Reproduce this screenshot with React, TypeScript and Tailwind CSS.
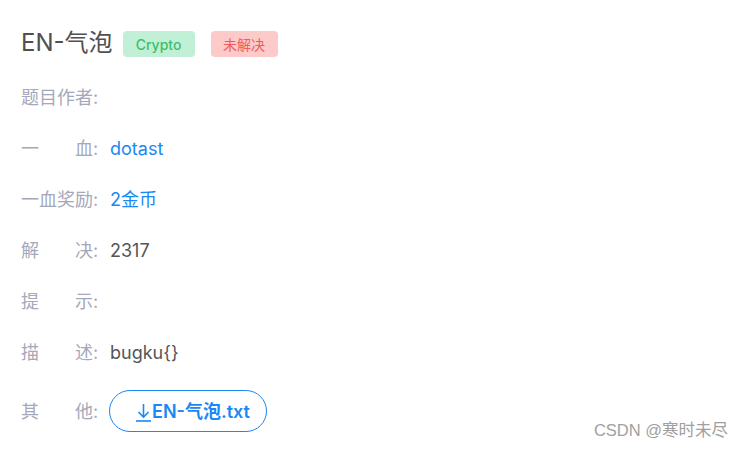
import React from "react";

const font = { fontFamily: '"Inter", "Noto Sans CJK SC", sans-serif' };

function Row({ label, children }: { label: string; children?: React.ReactNode }) {
  return (
    <div className="flex items-center h-[27px] text-[18px] leading-[27px]">
      <span className="inline-block w-[72px] text-justify [text-align-last:justify] text-[#a5a8ba]">{label}</span>
      <span className="inline-block w-[17px] text-[#a5a8ba]">:</span>
      <span className="text-[#555]">{children}</span>
    </div>
  );
}

export default function App() {
  return (
    <div className="relative w-[744px] h-[452px] bg-white overflow-hidden" style={font}>
      <div className="pl-[21px] pt-[23px]">
        {/* title */}
        <div className="flex items-center h-[40px]">
          <span className="text-[24px] text-[#505050]">EN-气泡</span>
          <span className="ml-[10px] mt-[2px] h-[26px] w-[72px] flex items-center justify-center rounded-[4px] bg-[#c2f0d7] text-[14px] font-medium text-[#3cbf6c]">Crypto</span>
          <span className="ml-[16px] mt-[2px] h-[26px] w-[67px] flex items-center justify-center rounded-[4px] bg-[#fdcaca] text-[14px] text-[#f25b5b]">未解决</span>
        </div>

        <div className="mt-[21px] flex flex-col gap-[24px]">
          <Row label="题目作者" />
          <Row label="一血">
            <span className="text-[#1a88f5]">dotast</span>
          </Row>
          <Row label="一血奖励">
            <span className="text-[#1a88f5]">2金币</span>
          </Row>
          <Row label="解决">2317</Row>
          <Row label="提示" />
          <Row label="描述">{"bugku{}"}</Row>
        </div>

        <div className="mt-[24px] flex items-center h-[42px] text-[18px]">
          <span className="inline-block w-[72px] text-justify [text-align-last:justify] text-[#a5a8ba]">其他</span>
          <span className="inline-block w-[16px] text-[#a5a8ba]">:</span>
          <a className="h-[42px] w-[158px] rounded-full border border-[#1a88f5] flex items-center pl-[26px] text-[#1a88f5] font-semibold text-[18px]">
            <svg width="15" height="20" viewBox="0 0 15 20" fill="none" stroke="#1a88f5" strokeWidth="1.6" className="mr-[1px] mt-[2px]">
              <path d="M7.5 2 V15" />
              <path d="M2.5 10 L7.5 15 L12.5 10" />
              <path d="M0 19 H15" />
            </svg>
            EN-气泡.txt
          </a>
        </div>
      </div>

      <div className="absolute right-[16px] bottom-[9px] text-[16.5px] text-[#a0a0a0]" style={{ fontFamily: '"Liberation Sans", "Noto Sans CJK SC", sans-serif' }}>
        CSDN @寒时未尽
      </div>
    </div>
  );
}
